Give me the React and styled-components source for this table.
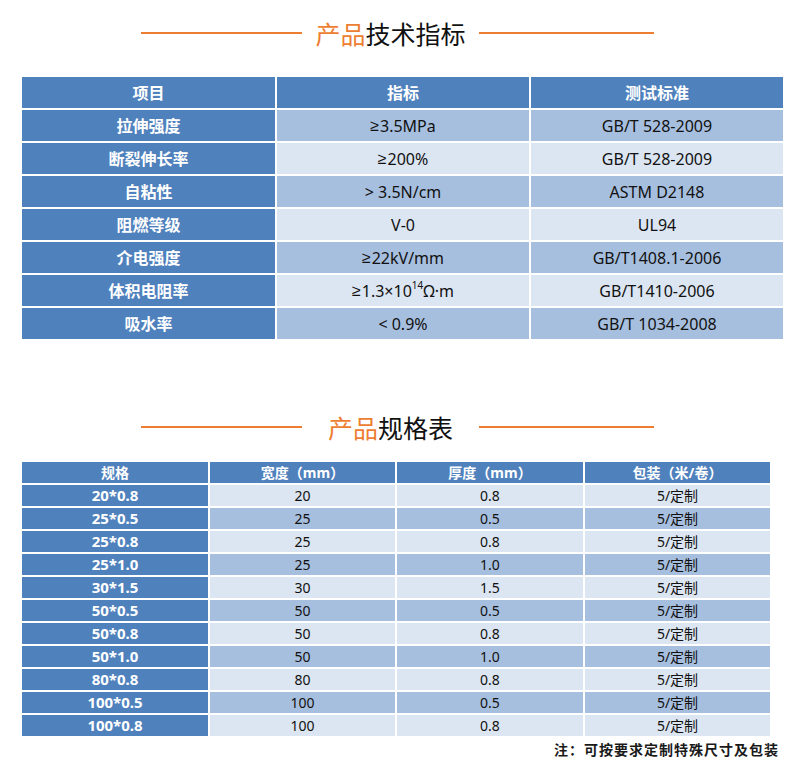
import React from "react";
import styled, { createGlobalStyle } from "styled-components";

const Global = createGlobalStyle`
  html, body { margin: 0; padding: 0; background: #ffffff; }
  body { font-family: "Noto Sans", "Noto Sans CJK SC", sans-serif; }
`;

const BLUE = "#4f81bd";
const MID = "#a7bfde";
const PALE = "#dce6f2";
const ORANGE = "#ed7d31";

const Page = styled.div`
  width: 800px;
  display: flex;
  flex-direction: column;
  padding-top: 8px;
  padding-bottom: 9px;
`;

const TitleRow = styled.div`
  height: 50px;
  margin-top: ${(p) => p.$top}px;
  display: flex;
  align-items: center;
  padding-left: 141px;
`;

const Rule = styled.div`
  width: ${(p) => p.$w}px;
  height: 2px;
  background: ${ORANGE};
`;

const TitleText = styled.div`
  width: 177px;
  text-align: center;
  font-family: "Noto Sans CJK SC", sans-serif;
  font-size: 25px;
  font-weight: 400;
  color: #111;
  white-space: nowrap;
  line-height: 1;
`;

const Accent = styled.span`
  color: ${ORANGE};
`;

const Grid = styled.div`
  margin-top: ${(p) => p.$top}px;
  margin-left: 22px;
  display: grid;
  grid-template-columns: ${(p) => p.$cols};
  grid-auto-rows: ${(p) => p.$row}px;
  gap: 2px;
`;

const bg = { head: BLUE, key: BLUE, mid: MID, pale: PALE };

const Cell = styled.div`
  display: flex;
  align-items: center;
  justify-content: center;
  background: ${(p) => bg[p.$tone]};
  color: ${(p) => (p.$tone === "head" || p.$tone === "key" ? "#ffffff" : "#111111")};
  font-family: "Noto Sans", "Noto Sans CJK SC", sans-serif;
  font-size: ${(p) => p.$size}px;
  font-weight: ${(p) => (p.$tone === "head" || p.$tone === "key" ? 700 : 400)};
  white-space: nowrap;
  line-height: 1;
`;

const Sym = styled.span`
  font-family: "Liberation Sans", "DejaVu Sans", sans-serif;
  margin-right: 1px;
`;

const Sup = styled.span`
  font-size: 10px;
  position: relative;
  top: -6px;
`;

const Note = styled.div`
  margin-top: 4px;
  width: 779px;
  text-align: right;
  font-family: "Noto Sans CJK SC", sans-serif;
  font-size: 14px;
  font-weight: 700;
  letter-spacing: 1px;
  color: #1a1a1a;
  line-height: 18px;
`;

const Ge = () => <Sym>≥</Sym>;

const techRows = [
  ["拉伸强度", <><Ge />3.5MPa</>, "GB/T 528-2009"],
  ["断裂伸长率", <><Ge />200%</>, "GB/T 528-2009"],
  ["自粘性", "> 3.5N/cm", "ASTM D2148"],
  ["阻燃等级", "V-0", "UL94"],
  ["介电强度", <><Ge />22kV/mm</>, "GB/T1408.1-2006"],
  [
    "体积电阻率",
    <>
      <Ge />1.3×10<Sup>14</Sup>Ω·m
    </>,
    "GB/T1410-2006",
  ],
  ["吸水率", "< 0.9%", "GB/T 1034-2008"],
];

const specRows = [
  ["20*0.8", "20", "0.8"],
  ["25*0.5", "25", "0.5"],
  ["25*0.8", "25", "0.8"],
  ["25*1.0", "25", "1.0"],
  ["30*1.5", "30", "1.5"],
  ["50*0.5", "50", "0.5"],
  ["50*0.8", "50", "0.8"],
  ["50*1.0", "50", "1.0"],
  ["80*0.8", "80", "0.8"],
  ["100*0.5", "100", "0.5"],
  ["100*0.8", "100", "0.8"],
];

function SectionTitle({ accent, rest, top }) {
  return (
    <TitleRow $top={top}>
      <Rule $w={161} />
      <TitleText>
        <Accent>{accent}</Accent>
        {rest}
      </TitleText>
      <Rule $w={175} />
    </TitleRow>
  );
}

export default function App() {
  return (
    <>
      <Global />
      <Page>
        <SectionTitle accent="产品" rest="技术指标" top={0} />
        <Grid $top={19} $cols="253px 252px 252px" $row={31}>
          {["项目", "指标", "测试标准"].map((h) => (
            <Cell key={h} $tone="head" $size={16}>
              {h}
            </Cell>
          ))}
          {techRows.map((r, i) => {
            const tone = i % 2 === 0 ? "mid" : "pale";
            return (
              <React.Fragment key={i}>
                <Cell $tone="key" $size={16}>
                  {r[0]}
                </Cell>
                <Cell $tone={tone} $size={16}>
                  {r[1]}
                </Cell>
                <Cell $tone={tone} $size={16}>
                  {r[2]}
                </Cell>
              </React.Fragment>
            );
          })}
        </Grid>

        <SectionTitle accent="产品" rest="规格表" top={63} />
        <Grid $top={10} $cols="186px 185px 186px 185px" $row={21}>
          {["规格", "宽度（mm）", "厚度（mm）", "包装（米/卷）"].map((h) => (
            <Cell key={h} $tone="head" $size={14}>
              {h}
            </Cell>
          ))}
          {specRows.map((r, i) => {
            const tone = i % 2 === 0 ? "pale" : "mid";
            return (
              <React.Fragment key={i}>
                <Cell $tone="key" $size={15}>
                  {r[0]}
                </Cell>
                <Cell $tone={tone} $size={14}>
                  {r[1]}
                </Cell>
                <Cell $tone={tone} $size={14}>
                  {r[2]}
                </Cell>
                <Cell $tone={tone} $size={14}>
                  5/定制
                </Cell>
              </React.Fragment>
            );
          })}
        </Grid>
        <Note>注：可按要求定制特殊尺寸及包装</Note>
      </Page>
    </>
  );
}
